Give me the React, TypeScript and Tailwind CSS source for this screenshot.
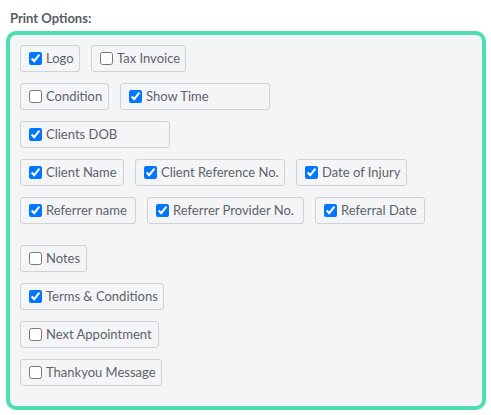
import React from "react";

type Opt = { label: string; checked: boolean; w: string };

const rows: Opt[][] = [
  [
    { label: "Logo", checked: true, w: "w-[60px]" },
    { label: "Tax Invoice", checked: false, w: "w-[95px]" },
  ],
  [
    { label: "Condition", checked: false, w: "w-[89px]" },
    { label: "Show Time", checked: true, w: "w-[150px]" },
  ],
  [{ label: "Clients DOB", checked: true, w: "w-[150px]" }],
  [
    { label: "Client Name", checked: true, w: "w-[104px]" },
    { label: "Client Reference No.", checked: true, w: "w-[150px]" },
    { label: "Date of Injury", checked: true, w: "w-[111px]" },
  ],
  [
    { label: "Referrer name", checked: true, w: "w-[116px]" },
    { label: "Referrer Provider No.", checked: true, w: "w-[157px]" },
    { label: "Referral Date", checked: true, w: "w-[110px]" },
  ],
];

const rows2: Opt[][] = [
  [{ label: "Notes", checked: false, w: "w-[67px]" }],
  [{ label: "Terms & Conditions", checked: true, w: "w-[144px]" }],
  [{ label: "Next Appointment", checked: false, w: "w-[139px]" }],
  [{ label: "Thankyou Message", checked: false, w: "w-[142px]" }],
];

function Item({ o }: { o: Opt }) {
  return (
    <label
      className={`${o.w} h-[27px] flex items-center gap-[4px] pl-[8px] border border-[#cfd2d6] rounded-[3px] bg-[#f4f5f7] text-[13px] text-[#5d636a] whitespace-nowrap`}
    >
      <input
        type="checkbox"
        defaultChecked={o.checked}
        className="m-0 w-[13px] h-[13px] shrink-0"
      />
      <span>{o.label}</span>
    </label>
  );
}

function Rows({ data }: { data: Opt[][] }) {
  return (
    <div className="flex flex-col gap-[11px]">
      {data.map((r, i) => (
        <div key={i} className="flex gap-[11px]">
          {r.map((o) => (
            <Item key={o.label} o={o} />
          ))}
        </div>
      ))}
    </div>
  );
}

export default function App() {
  return (
    <div
      className="w-[491px] h-[415px] bg-white pt-[9px] px-[6px]"
      style={{ fontFamily: "Lato, 'Noto Sans', sans-serif" }}
    >
      <div className="pl-[4px] text-[13px] font-bold text-[#575d63] leading-[18px]">
        Print Options:
      </div>
      <div className="mt-[4px] w-[480px] h-[379px] border-[4px] border-[#4fddb2] rounded-[10px] bg-[#f4f5f7] pt-[10px] pl-[10px] flex flex-col gap-[21px]">
        <Rows data={rows} />
        <Rows data={rows2} />
      </div>
    </div>
  );
}
